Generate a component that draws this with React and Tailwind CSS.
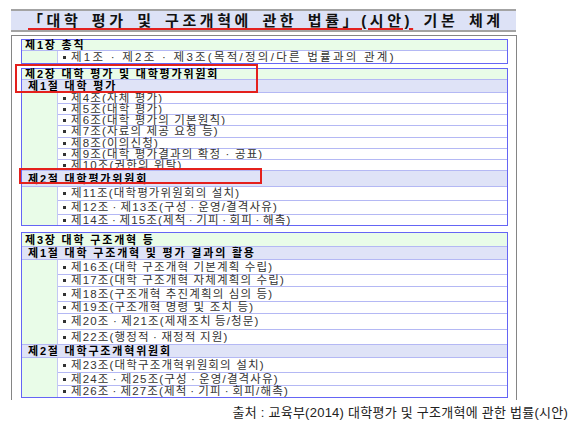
import React from "react";

// [text, row height, tracking/word-spacing override]
const groups = [
  {
    gap: 0,
    rows: [
      { kind: "ch", text: "제1장 총칙", h: 10 },
      {
        kind: "arts",
        items: [["제1조 · 제2조 · 제3조(목적/정의/다른 법률과의 관계)", 12, "tracking-[2.25px]"]],
      },
    ],
  },
  {
    gap: 4,
    rows: [
      { kind: "ch", text: "제2장 대학 평가 및 대학평가위원회", h: 10 },
      { kind: "sec", text: "제1절 대학 평가", h: 13 },
      {
        kind: "arts",
        items: [
          ["제4조(자체 평가)", 10],
          ["제5조(대학 평가)", 11],
          ["제6조(대학 평가의 기본원칙)", 11],
          ["제7조(자료의 제공 요청 등)", 12],
          ["제8조(이의신청)", 11],
          ["제9조(대학 평가결과의 확정 · 공표)", 11],
          ["제10조(권한의 위탁)", 11],
        ],
      },
      { kind: "sec", text: "제2절 대학평가위원회", h: 16 },
      {
        kind: "arts",
        items: [
          ["제11조(대학평가위원회의 설치)", 13],
          ["제12조 · 제13조(구성 · 운영/결격사유)", 14, "tracking-[1.15px] [word-spacing:-1.4px]"],
          ["제14조 · 제15조(제척 · 기피 · 회피 · 해촉)", 11, "tracking-[1.15px] [word-spacing:-1.9px]"],
        ],
      },
    ],
  },
  {
    gap: 6,
    rows: [
      { kind: "ch", text: "제3장 대학 구조개혁 등", h: 13 },
      { kind: "sec", text: "제1절 대학 구조개혁 및 평가 결과의 활용", h: 13 },
      {
        kind: "arts",
        items: [
          ["제16조(대학 구조개혁 기본계획 수립)", 14],
          ["제17조(대학 구조개혁 자체계획의 수립)", 12],
          ["제18조(구조개혁 추진계획의 심의 등)", 15],
          ["제19조(구조개혁 명령 및 조치 등)", 12],
          ["제20조 · 제21조(제재조치 등/청문)", 16, "tracking-[1.15px] [word-spacing:-1px]"],
          ["제22조(행정적 · 재정적 지원)", 15, "tracking-[1.15px] [word-spacing:-1px]"],
        ],
      },
      { kind: "sec", text: "제2절 대학구조개혁위원회", h: 13 },
      {
        kind: "arts",
        items: [
          ["제23조(대학구조개혁위원회의 설치)", 14],
          ["제24조 · 제25조(구성 · 운영/결격사유)", 13, "tracking-[1.15px] [word-spacing:-1.2px]"],
          ["제26조 · 제27조(제척 · 기피 · 회피/해촉)", 12, "tracking-[1.15px] [word-spacing:-1.4px]"],
        ],
      },
    ],
  },
  {
    gap: 4,
    rows: [{ kind: "ch", text: "", h: 13 }],
  },
];

function Row({ row, first }) {
  const divider = first ? "" : "border-t border-[#b4b8f4]";
  if (row.kind === "ch") {
    return (
      <div
        className={`flex items-center bg-[#e9fce8] pl-[3px] text-[11px] font-bold leading-[10px] tracking-[1.8px] text-black ${divider}`}
        style={{ height: row.h }}
      >
        {row.text}
      </div>
    );
  }
  if (row.kind === "sec") {
    return (
      <div
        className={`flex items-center bg-[#dfe3f7] pl-[6px] text-[11px] font-bold leading-[10px] tracking-[1.8px] text-black ${divider}`}
        style={{ height: row.h }}
      >
        {row.text}
      </div>
    );
  }
  return (
    <div className={`flex ${divider}`}>
      <div className="w-[35px] shrink-0 bg-[#e9fce8]" />
      <div className="flex flex-1 flex-col border-l border-[#c4c8f4] bg-white">
        {row.items.map(([text, h, track], i) => (
          <div
            key={i}
            className={`flex items-center pl-[5px] text-[11.5px] leading-[9px] text-[#333] ${track || "tracking-[1.15px]"} ${i ? "border-t border-[#b4b8f4]" : ""}`}
            style={{ height: h }}
          >
            <span className="mr-[5px] inline-block h-[3px] w-[3px] shrink-0 bg-[#333]" />
            <span>{text}</span>
          </div>
        ))}
      </div>
    </div>
  );
}

export default function App() {
  return (
    <div className="relative h-[430px] w-[580px] overflow-hidden bg-white font-['Liberation_Sans','Noto_Sans_CJK_KR',sans-serif] leading-none">
      <div className="ml-[11px] mt-[9px] flex h-[23px] w-[505px] items-center border-y-2 border-[#a3a3a3] bg-[#dde2f6] pl-[17px]">
        <span className="text-[15px] font-bold tracking-[3.6px] text-[#111] [word-spacing:2.7px]">
          <span className="underline decoration-[#e3211f] decoration-2 underline-offset-[2px]">
            「대학 평가 및 구조개혁에 관한 법률」(시안)
          </span>{" "}
          기본 체계
        </span>
      </div>

      <div className="ml-[11px] mt-[3px] h-[365px] w-[506px] overflow-hidden border-x border-t border-[#858585] pl-[9px] pr-[8px] pt-[3px]">
        {groups.map((g, gi) => (
          <div
            key={gi}
            className="flex flex-col border border-[#6565f5]"
            style={{ marginTop: g.gap }}
          >
            {g.rows.map((row, ri) => (
              <Row key={ri} row={row} first={ri === 0} />
            ))}
          </div>
        ))}
      </div>

      <div className="mt-[6px] pr-[12px] text-right text-[13px] tracking-[0.25px] text-[#222]">
        출처 : 교육부(2014) 대학평가 및 구조개혁에 관한 법률(시안)
      </div>

      {/* red highlight frames over chapter 2 headings */}
      <div className="absolute left-[15px] top-[64px] h-[29px] w-[243px] border-2 border-[#e4201c]" />
      <div className="absolute left-[19px] top-[168px] h-[16px] w-[243px] border-2 border-[#e4201c]" />
    </div>
  );
}
